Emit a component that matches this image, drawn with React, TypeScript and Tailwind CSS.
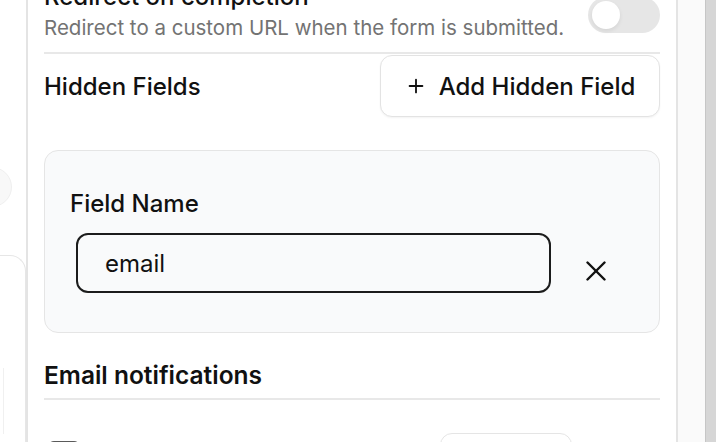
import { Plus } from 'lucide-react'

function Toggle() {
    return (
        <div className="mt-[16px] flex h-[36px] w-[72px] shrink-0 items-center rounded-full bg-[#e6e6e6] px-[4px]">
            <div className="h-[28px] w-[28px] rounded-full bg-white shadow-[0_2px_4px_rgba(0,0,0,0.08)]" />
        </div>
    )
}

function CloseIcon() {
    return (
        <svg width="20" height="20" viewBox="0 0 20 20" fill="none" stroke="#111" strokeWidth="2.4" strokeLinecap="round">
            <path d="M1.5 1.5 18.5 18.5" />
            <path d="M18.5 1.5 1.5 18.5" />
        </svg>
    )
}

export default function App() {
    return (
        <div className="flex h-[442px] w-[716px] overflow-hidden bg-white font-[Inter,'Liberation_Sans',sans-serif] text-[#111]">
            {/* left sliver of the neighbouring panel */}
            <div className="flex w-[26px] shrink-0 flex-col">
                <div className="-ml-[28px] mt-[167px] h-[40px] w-[40px] shrink-0 rounded-full border border-[#efefef] bg-[#f8f8f8]" />
                <div className="-ml-[20px] mt-[48px] h-[200px] w-[46px] shrink-0 rounded-tr-[16px] border-t-[1.5px] border-r-[1.5px] border-[#e6e6e6]">
                    <div className="ml-[23px] mt-[112px] h-[66px] w-px bg-[#f0f0f0]" />
                </div>
            </div>
            <div className="w-[2px] shrink-0 bg-[#e4e4e4]" />

            <div className="flex w-[648px] shrink-0 flex-col px-4 [&>*]:shrink-0">
                <div className="-mt-[19px] flex items-start justify-between">
                    <div>
                        <h3 className="text-[24px] font-medium leading-[32px]">Redirect on completion</h3>
                        <p className="mt-[2px] text-[20.5px] leading-[26px] text-[#737373]">
                            Redirect to a custom URL when the form is submitted.
                        </p>
                    </div>
                    <Toggle />
                </div>

                <div className="mt-[11px] h-[2px] bg-[#e8e8e8]" />

                <div className="mt-[1px] flex items-center justify-between">
                    <h2 className="pt-[2px] text-[24px] font-medium leading-[32px]">Hidden Fields</h2>
                    <button className="flex h-[62px] w-[280px] items-center justify-center gap-[12px] rounded-[12px] border-[1.5px] border-[#e3e3e3] bg-white shadow-[0_1px_2px_rgba(0,0,0,0.05)]">
                        <Plus size={22} strokeWidth={2} />
                        <span className="pt-[1px] text-[24px] font-medium">Add Hidden Field</span>
                    </button>
                </div>

                <div className="mt-[33px] h-[183px] rounded-[14px] border-[1.5px] border-[#e5e5e5] bg-[#f9fafb] pl-[25px] pt-[37px]">
                    <label className="block text-[24px] font-medium leading-[32px]">Field Name</label>
                    <div className="mt-[13px] flex items-start">
                        <div className="ml-[6px] flex h-[60px] w-[475px] items-center rounded-[12px] border-2 border-[#1c1c1c] px-[27px] pt-[2px] text-[24px]">
                            email
                        </div>
                        <div className="ml-[35px] mt-[28px]">
                            <CloseIcon />
                        </div>
                    </div>
                </div>

                <h2 className="mt-[26px] text-[24.5px] font-semibold leading-[32px]">Email notifications</h2>
                <div className="mt-[7px] h-[2px] bg-[#e8e8e8]" />

                <div className="flex items-start">
                    <div className="ml-[4px] mt-[41px] h-[32px] w-[32px] shrink-0 rounded-[6px] border-2 border-[#5a5a5a]" />
                    <div className="ml-auto mr-[88px] mt-[33px] h-[50px] w-[132px] shrink-0 rounded-[12px] border-[1.5px] border-[#e5e5e5]" />
                </div>
            </div>

            <div className="w-[2px] shrink-0 bg-[#e4e4e4]" />
            <div className="w-[27px] shrink-0 bg-[#fafafa]" />
            <div className="w-px shrink-0 bg-[#c6c6c6]" />
            <div className="w-[10px] shrink-0 bg-[#d6d6d6]" />
        </div>
    )
}
